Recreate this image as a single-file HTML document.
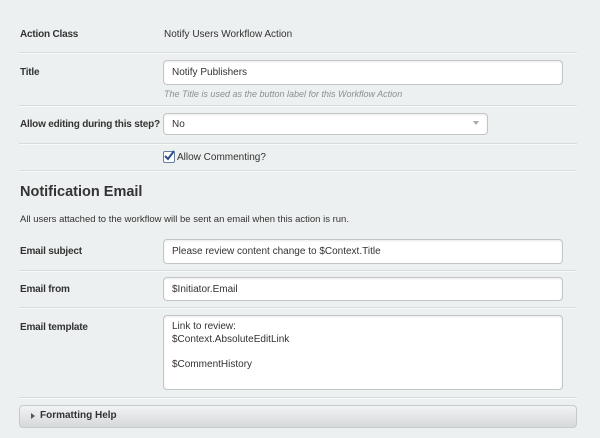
<!DOCTYPE html>
<html><head><style>
body{margin:0;width:600px;height:438px;background:#edf0f0;font-family:"Liberation Sans",sans-serif;font-size:11px;color:#333;position:relative;overflow:hidden}
.a{position:absolute}
.lbl{position:absolute;left:20px;font-weight:bold;font-size:10px;letter-spacing:-0.2px;color:#333;white-space:nowrap}
.hr{position:absolute;left:19px;width:558px;height:1px;background:#d7dbdc;border-bottom:1px solid #f8f9f9}
.inp{position:absolute;left:163px;width:400px;height:23px;background:#fff;border:1px solid #c2c6c8;border-radius:4px;box-sizing:border-box;padding:5px 8px;font-size:10px;color:#333;box-shadow:inset 0 1px 2px rgba(0,0,0,.08)}
</style></head><body>
<div class="lbl" style="top:29px">Action Class</div>
<div class="a" style="left:164px;top:29px;font-size:10px">Notify Users Workflow Action</div>
<div class="hr" style="top:52px"></div>
<div class="lbl" style="top:67px">Title</div>
<div class="inp" style="top:60px;height:25px;padding-top:6px">Notify Publishers</div>
<div class="a" style="left:164px;top:89px;font-size:9px;font-style:italic;color:#8a8f92">The Title is used as the button label for this Workflow Action</div>
<div class="hr" style="top:105px"></div>
<div class="lbl" style="top:119px">Allow editing during this step?</div>
<div class="inp" style="top:113px;width:325px;height:22px;padding-top:5px">No<span style="position:absolute;right:8px;top:7px;width:0;height:0;border-left:3px solid transparent;border-right:3px solid transparent;border-top:4px solid #aaa"></span></div>
<div class="hr" style="top:143px"></div>
<div class="a" style="left:163px;top:151px;width:10px;height:10px;background:#fff;border:1px solid #6a7ea0;border-radius:2px"><svg width="11" height="11" style="position:absolute;left:0;top:-2px"><path d="M1 6 L4 9 L10 1" stroke="#2c4f8a" stroke-width="2" fill="none"/></svg></div>
<div class="a" style="left:177px;top:152px;font-size:10px">Allow Commenting?</div>
<div class="hr" style="top:170px"></div>
<div class="a" style="left:20px;top:184px;font-size:14.5px;font-weight:bold;color:#333">Notification Email</div>
<div class="a" style="left:20px;top:214px;font-size:9.5px">All users attached to the workflow will be sent an email when this action is run.</div>
<div class="lbl" style="top:246px">Email subject</div>
<div class="inp" style="top:239px;height:25px;padding-top:6px">Please review content change to $Context.Title</div>
<div class="hr" style="top:270px"></div>
<div class="lbl" style="top:284px">Email from</div>
<div class="inp" style="top:277px;height:24px;padding-top:6px">$Initiator.Email</div>
<div class="hr" style="top:307px"></div>
<div class="lbl" style="top:322px">Email template</div>
<div class="inp" style="top:315px;height:75px;line-height:12.5px;padding-top:5px">Link to review:<br>$Context.AbsoluteEditLink<br><br>$CommentHistory</div>
<div class="hr" style="top:397px"></div>
<div class="a" style="left:19px;top:405px;width:558px;height:23px;border:1px solid #c6cacc;border-radius:4px;background:linear-gradient(#f2f3f4,#d6d9db);box-sizing:border-box"></div>
<div class="a" style="left:31px;top:413px;width:0;height:0;border-top:3px solid transparent;border-bottom:3px solid transparent;border-left:4px solid #555"></div>
<div class="a" style="left:40px;top:410px;font-weight:bold;font-size:10px">Formatting Help</div>
</body></html>
